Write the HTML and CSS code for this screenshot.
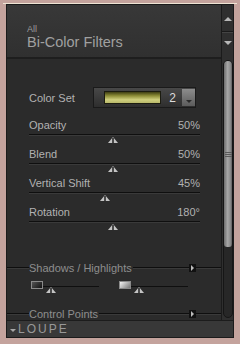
FILE: index.html
```html
<!DOCTYPE html>
<html lang="en">
    <head>
        <meta charset="UTF-8" />
        <meta name="viewport" content="width=device-width, initial-scale=1.0" />
        <title>Bi-Color Filters</title>
        <link rel="stylesheet" href="styles.css">
    </head>
    <body>
        <div class="window">
            <div class="panel">
                <div class="panel-body">
                    <!-- filter settings -->
                    <div class="main">
                        <div class="header">
                            <div class="header-sub">All</div>
                            <div class="header-title">Bi-Color Filters</div>
                        </div>

                        <div class="content">
                            <div class="color-set">
                                <span class="label">Color Set</span>
                                <div class="color-box">
                                    <div class="swatch"></div>
                                    <span class="color-num">2</span>
                                    <div class="color-drop"><span class="tri-down"></span></div>
                                </div>
                            </div>

                            <div class="slider">
                                <div class="slider-head"><span>Opacity</span><span>50%</span></div>
                                <div class="track"></div>
                                <div class="thumb-row"><span class="thumb" style="margin-left: 46%"></span></div>
                            </div>
                            <div class="slider">
                                <div class="slider-head"><span>Blend</span><span>50%</span></div>
                                <div class="track"></div>
                                <div class="thumb-row"><span class="thumb" style="margin-left: 46%"></span></div>
                            </div>
                            <div class="slider">
                                <div class="slider-head"><span>Vertical Shift</span><span>45%</span></div>
                                <div class="track"></div>
                                <div class="thumb-row"><span class="thumb" style="margin-left: 41.5%"></span></div>
                            </div>
                            <div class="slider">
                                <div class="slider-head"><span>Rotation</span><span>180°</span></div>
                                <div class="track"></div>
                                <div class="thumb-row"><span class="thumb" style="margin-left: 46%"></span></div>
                            </div>

                            <div class="section section-shadows">
                                <span class="section-title">Shadows / Highlights</span>
                                <span class="section-btn"><span class="tri-right"></span></span>
                            </div>

                            <div class="tones">
                                <div class="tone">
                                    <span class="tone-swatch dark"></span>
                                    <div class="tone-track w56"><span class="thumb"></span></div>
                                </div>
                                <div class="tone">
                                    <span class="tone-swatch light"></span>
                                    <div class="tone-track w57"><span class="thumb"></span></div>
                                </div>
                            </div>

                            <div class="section section-points">
                                <span class="section-title">Control Points</span>
                                <span class="section-btn"><span class="tri-right"></span></span>
                            </div>
                        </div>
                    </div>

                    <!-- scrollbar -->
                    <div class="scrollbar">
                        <div class="scroll-up"><span class="arrow-up"></span></div>
                        <div class="scroll-down"><span class="arrow-down"></span></div>
                        <div class="scroll-track">
                            <div class="scroll-thumb">
                                <span class="grip"></span>
                            </div>
                        </div>
                    </div>
                </div>

                <div class="loupe">
                    <span class="loupe-tri"></span>
                    <span class="loupe-text">LOUPE</span>
                </div>
            </div>
        </div>
    </body>
</html>
```

FILE: styles.css
```css
body {
    margin: 0;
    background-color: #c4a39d;
    font-family: "Liberation Sans", Arial, sans-serif;
    color: #b2b2b2;
}

.window {
    margin: 3px 3px 0 3px;
    padding: 0 3px;
    border-top: 1px solid #eee4d4;
}

.panel {
    height: 332px;
    border: 1px solid #1b1b1b;
    background-color: #2b2b2b;
    display: flex;
    flex-direction: column;
}

.panel-body {
    height: 315px;
    display: flex;
}

/* main column */
.main {
    width: 214px;
    display: flex;
    flex-direction: column;
    overflow: hidden;
}

.header {
    height: 54px;
    flex-shrink: 0;
    box-sizing: border-box;
    padding: 19px 0 0 20px;
    background: linear-gradient(#383838, #303030);
    border-bottom: 2px solid #1e1e1e;
}

.header-sub {
    font-size: 9px;
    line-height: 10px;
    color: #9c9c9c;
}

.header-title {
    font-size: 14.5px;
    line-height: 16px;
    color: #a0a0a0;
}

.content {
    flex: 1;
    overflow: hidden;
}

/* color set */
.color-set {
    display: flex;
    align-items: center;
    margin: 28px 0 0 22px;
    height: 21px;
}

.label {
    font-size: 11px;
    width: 64px;
}

.color-box {
    width: 103px;
    height: 21px;
    box-sizing: border-box;
    border: 1px solid #1a1a1a;
    background: linear-gradient(#484848, #2e2e2e);
    display: flex;
    align-items: center;
    padding-left: 10px;
}

.swatch {
    width: 58px;
    height: 13px;
    border: 1px solid #1c1c10;
    box-sizing: border-box;
    background: linear-gradient(#3e3e12, #8e8e38 35%, #cfcf7e 70%, #b8b86a);
}

.color-num {
    font-size: 12px;
    color: #dcdcdc;
    margin-left: 8px;
    width: 13px;
}

.color-drop {
    width: 13px;
    height: 17px;
    background: linear-gradient(#8c8c8c, #5c5c5c);
    display: flex;
    align-items: flex-end;
    justify-content: center;
    padding-bottom: 3px;
    box-sizing: border-box;
}

.tri-down {
    border-left: 3px solid transparent;
    border-right: 3px solid transparent;
    border-top: 3px solid #2a2a2a;
}

/* sliders */
.slider {
    margin-left: 22px;
    width: 171px;
    height: 29px;
}

.color-set + .slider {
    margin-top: 11px;
}

.slider-head {
    display: flex;
    justify-content: space-between;
    font-size: 11px;
    line-height: 13px;
    height: 13px;
}

.track {
    margin-top: 2px;
    height: 1px;
    background-color: #0f0f0f;
    border-bottom: 1px solid #3a3a3a;
}

.thumb-row {
    margin-top: 1px;
    height: 6px;
    display: flex;
}

.thumb {
    display: block;
    flex-shrink: 0;
    width: 0;
    height: 0;
    border-left: 5px solid transparent;
    border-right: 5px solid transparent;
    border-bottom: 6px solid #c4c4c4;
    position: relative;
}

.thumb::after {
    content: "";
    position: absolute;
    left: -1px;
    top: 1px;
    width: 2px;
    height: 5px;
    background-color: #4a4a4a;
}

/* sections */
.section {
    display: flex;
    align-items: center;
    height: 12px;
    padding-left: 22px;
    background: linear-gradient(transparent 5px, #0e0e0e 5px, #0e0e0e 6px, #3a3a3a 6px, #3a3a3a 7px, transparent 7px);
}

.section-shadows {
    margin-top: 27px;
}

.section-points {
    margin-top: 15px;
}

.section-title {
    font-size: 11px;
    line-height: 12px;
    color: #8e8e8e;
    background-color: #2b2b2b;
    padding-right: 1px;
}

.section-btn {
    margin-left: auto;
    margin-right: 25px;
    width: 7px;
    height: 8px;
    background-color: #111;
    display: flex;
    align-items: center;
    justify-content: center;
}

.tri-right {
    border-top: 3px solid transparent;
    border-bottom: 3px solid transparent;
    border-left: 3px solid #bcbcbc;
}

/* shadows / highlights */
.tones {
    display: flex;
    gap: 20px;
    margin: 7px 0 0 24px;
}

.tone {
    display: flex;
    align-items: flex-start;
}

.tone-swatch {
    width: 12px;
    height: 8px;
    box-sizing: border-box;
    border: 1px solid #8a8a8a;
}

.tone-swatch.dark {
    background: linear-gradient(135deg, #555, #111);
}

.tone-swatch.light {
    background: linear-gradient(135deg, #f4f4f4, #777);
}

.tone-track {
    display: flex;
    height: 12px;
    box-sizing: border-box;
    padding: 6px 0 0 3px;
    background: linear-gradient(transparent 5px, #0f0f0f 5px, #0f0f0f 6px, transparent 6px);
}

.w56 {
    width: 56px;
}

.w57 {
    width: 57px;
}

/* scrollbar */
.scrollbar {
    width: 11px;
    border-left: 1px solid #1b1b1b;
    background-color: #2f2f2f;
    display: flex;
    flex-direction: column;
}

.scroll-up {
    height: 27px;
    border-bottom: 1px solid #1a1a1a;
    box-shadow: 0 1px 0 #444;
    display: flex;
    align-items: center;
    justify-content: center;
    padding-top: 2px;
    box-sizing: border-box;
}

.scroll-down {
    height: 22px;
    display: flex;
    align-items: center;
    justify-content: center;
}

.arrow-up {
    border-left: 4px solid transparent;
    border-right: 4px solid transparent;
    border-bottom: 4px solid #b8b8b8;
}

.arrow-down {
    border-left: 4px solid transparent;
    border-right: 4px solid transparent;
    border-top: 4px solid #b8b8b8;
}

.scroll-track {
    flex: 1;
    margin: 6px 0 2px 1px;
    border: 1px solid #161616;
    border-radius: 5px;
    background-color: #272727;
}

.scroll-thumb {
    height: 186px;
    border-radius: 5px 5px 4px 4px;
    background: linear-gradient(to right, #6c6c6c, #a6a6a6 45%, #8a8a8a 80%, #5e5e5e);
    display: flex;
    align-items: center;
    justify-content: center;
}

.grip {
    width: 7px;
    height: 5px;
    background: repeating-linear-gradient(#5a5a5a 0, #5a5a5a 1px, transparent 1px, transparent 2px);
}

/* loupe */
.loupe {
    flex: 1;
    border-top: 1px solid #1c1c1c;
    background-color: #383838;
    display: flex;
    align-items: center;
    padding-left: 3px;
}

.loupe-tri {
    border-left: 3px solid transparent;
    border-right: 3px solid transparent;
    border-top: 3px solid #a8a8a8;
    margin-top: 2px;
}

.loupe-text {
    margin-left: 2px;
    font-size: 12px;
    letter-spacing: 2px;
    color: #989898;
}
```
